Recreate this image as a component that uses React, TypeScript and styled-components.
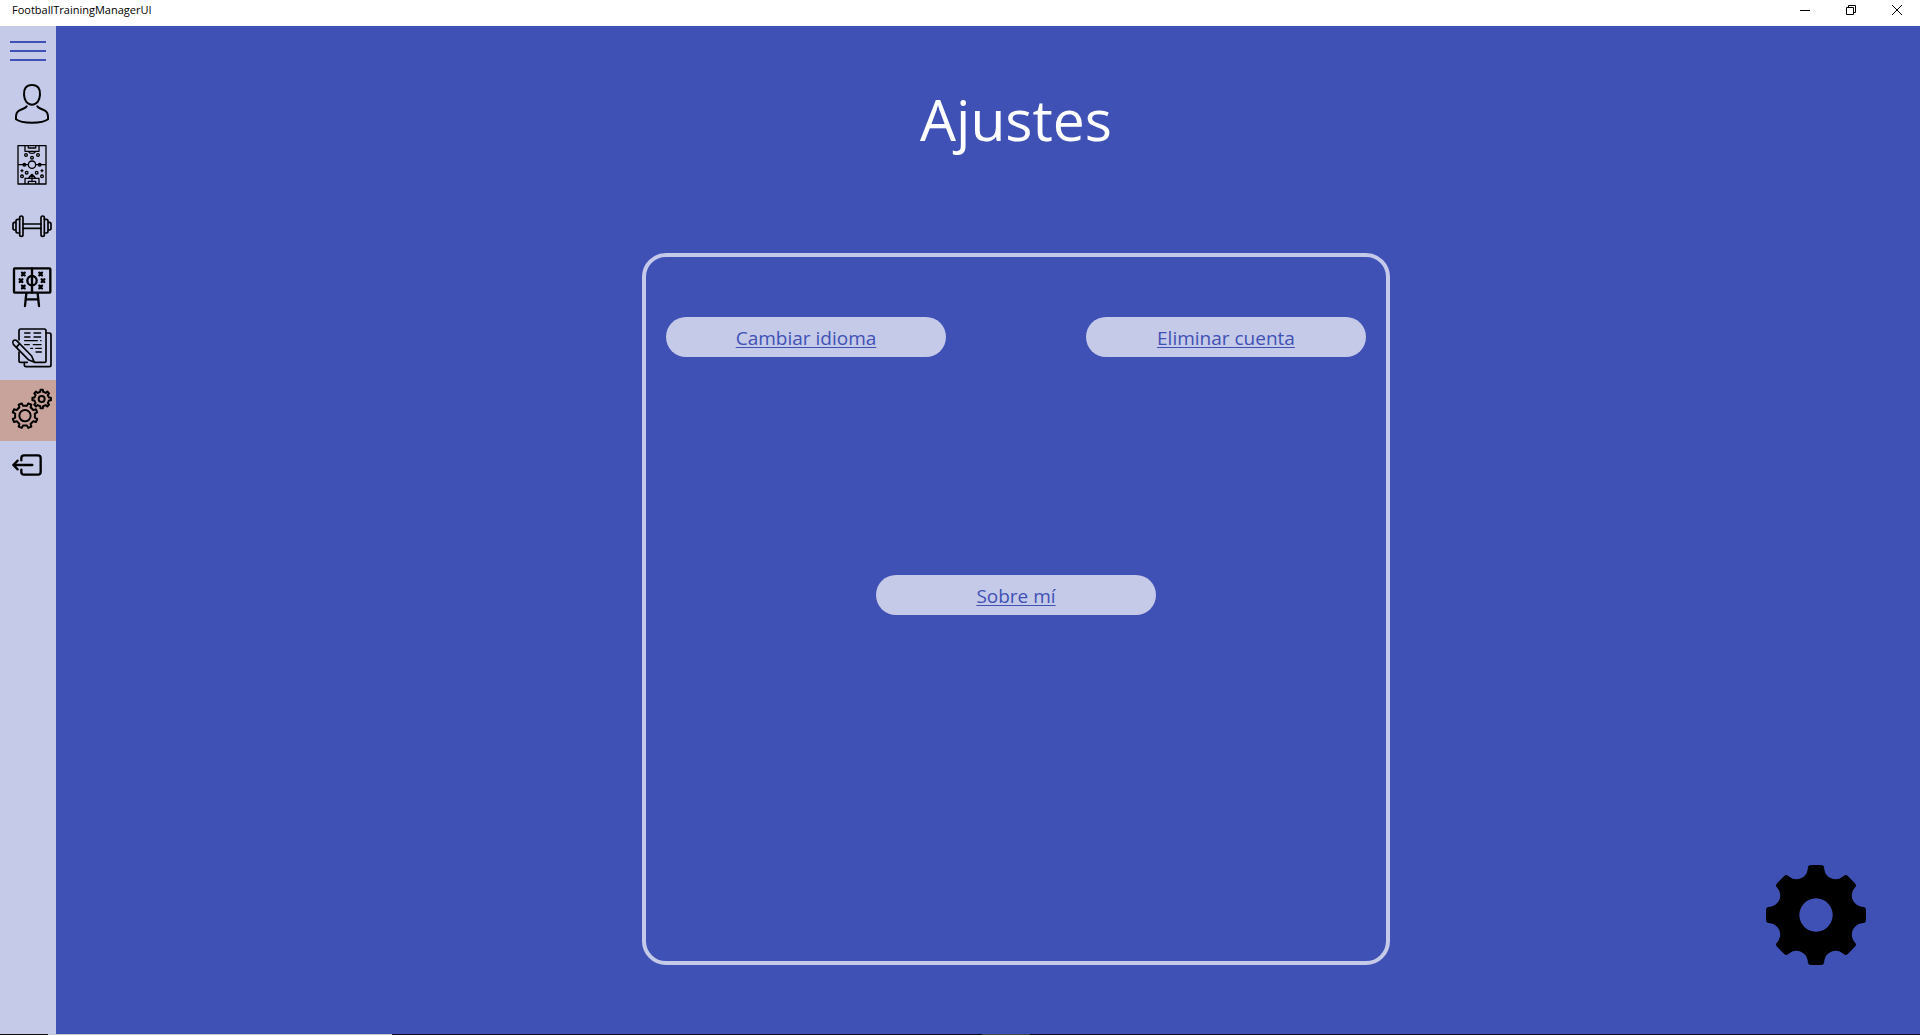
import React from "react";
import styled, { createGlobalStyle } from "styled-components";

const indigo = "#3f51b5";
const lavender = "#c5cae9";

const GlobalStyle = createGlobalStyle`
  *, *::before, *::after { box-sizing: border-box; }
  body {
    margin: 0;
    font-family: "Open Sans", "Noto Sans", sans-serif;
  }
  button { font: inherit; border: 0; padding: 0; cursor: pointer; }
`;

const Window = styled.div`
  display: flex;
  flex-direction: column;
  min-height: 100vh;
  background: ${indigo};
`;

const TitleBar = styled.header`
  display: flex;
  justify-content: space-between;
  height: 26px;
  padding-left: 12px;
  background: #fff;
  color: #000;
  font-size: 11px;
  line-height: 20px;
`;

const WindowControls = styled.div`
  display: flex;
`;

const WindowButton = styled.button`
  display: flex;
  align-items: center;
  justify-content: center;
  width: 46px;
  height: 20px;
  background: transparent;
`;

const Body = styled.div`
  display: flex;
  flex: 1;
`;

const Sidebar = styled.nav`
  display: flex;
  flex-direction: column;
  flex: none;
  width: 56px;
  background: ${lavender};
`;

const MenuToggle = styled.button`
  display: flex;
  align-items: center;
  height: 49px;
  padding-left: 10px;
  background: transparent;
`;

const NavButton = styled.button<{ $active?: boolean; $compact?: boolean }>`
  display: flex;
  align-items: ${(p) => (p.$compact ? "center" : "flex-start")};
  height: ${(p) => (p.$compact ? 48 : 61)}px;
  padding: ${(p) => (p.$compact ? 0 : 9)}px 0 0 12px;
  background: ${(p) => (p.$active ? "#c8a39b" : "transparent")};
`;

const LineIcon = styled.svg<{ $weight: number }>`
  display: block;
  flex: none;
  overflow: visible;
  fill: none;
  stroke: #000;
  stroke-width: ${(p) => p.$weight};
  stroke-linecap: round;
  stroke-linejoin: round;
`;

const Content = styled.main`
  display: grid;
  grid-template-columns: 1fr minmax(auto, 748px) 1fr;
  grid-template-rows: 227px 1fr;
  flex: 1;
  padding: 0 0 69px 56px;
`;

const Title = styled.h1`
  grid-column: 1 / -1;
  margin: 0;
  padding-top: 53px;
  color: #fff;
  font-size: 57px;
  font-weight: 400;
  line-height: 80px;
  text-align: center;
`;

const Card = styled.section`
  grid-column: 2;
  display: flex;
  flex-wrap: wrap;
  justify-content: space-between;
  align-content: flex-start;
  row-gap: 218px;
  padding: 60px 20px;
  border: 4px solid ${lavender};
  border-radius: 24px;
`;

const PillButton = styled.button<{ $centered?: boolean }>`
  width: 280px;
  height: 40px;
  margin: ${(p) => (p.$centered ? "0 auto" : "0")};
  padding-top: 2px;
  border-radius: 20px;
  background: ${lavender};
  color: ${indigo};
  font-size: 19px;
  line-height: 38px;
  text-decoration: underline;
  text-decoration-thickness: 1px;
  text-underline-offset: 2px;
`;

const Corner = styled.div`
  display: flex;
  align-items: flex-end;
  justify-content: flex-end;
  padding-right: 54px;
`;

const TaskbarEdge = styled.footer`
  height: 1px;
  background: linear-gradient(
    to right,
    #120c14 48px,
    #c4c6cf 48px 392px,
    #0c0a1c 392px 982px,
    #45404e 982px 1030px,
    #0c0a1c 1030px
  );
`;

/* Outline of a toothed wheel: flat teeth joined by rounded valleys. */
function cogPath(cx: number, cy: number, outer: number, root: number, teeth: number, turn = 0) {
  const step = (Math.PI * 2) / teeth;
  const at = (r: number, a: number) =>
    `${(cx + r * Math.sin(a)).toFixed(1)} ${(cy - r * Math.cos(a)).toFixed(1)}`;
  let d = "";
  for (let i = 0; i < teeth; i++) {
    const a = i * step + turn;
    d += `${i ? "L" : "M"}${at(root, a - step * 0.25)}L${at(outer, a - step * 0.17)}`;
    d += `L${at(outer, a + step * 0.17)}L${at(root, a + step * 0.25)}`;
    d += `Q${at(root, a + step * 0.5)} ${at(root, a + step * 0.75)}`;
  }
  return d + "Z";
}

/* Solid wheel with eight teeth and deep circular notches. */
function solidCogPath() {
  const pt = (x: number, y: number, k: number) => {
    const a = (k * Math.PI) / 4;
    const px = x * Math.cos(a) - y * Math.sin(a);
    const py = x * Math.sin(a) + y * Math.cos(a);
    return `${(150 + px).toFixed(1)} ${(150 + py).toFixed(1)}`;
  };
  let d = `M${pt(-25, -136, 0)}`;
  for (let k = 0; k < 8; k++) {
    d += `L${pt(-24, -144, k)}Q${pt(-23, -150, k)} ${pt(-15, -150, k)}`;
    d += `L${pt(15, -150, k)}Q${pt(23, -150, k)} ${pt(24, -144, k)}`;
    d += `L${pt(25, -136, k)}A34 34 0 0 0 ${pt(-25, -136, k + 1)}`;
  }
  return d + "ZM150 100a50 50 0 1 0 .1 0Z";
}

const PersonIcon = () => (
  <LineIcon width="40" height="40" viewBox="0 0 120 120" $weight={6}>
    <path d="M60 3C42 3 35 15 36 32C37 50 46 62 60 62C74 62 83 50 84 32C85 15 78 3 60 3Z" />
    <path d="M44 67C36 79 12 74 12 97V106C30 120 90 120 108 106V97C108 74 84 79 76 67" />
  </LineIcon>
);

const PitchIcon = () => (
  <LineIcon width="40" height="40" viewBox="0 0 120 120" $weight={4}>
    <path d="M18 2H102V117H18ZM18 59H49M71 59H102M39 2V19H81V2M49 2V9H71V2M50 20C53 27 67 27 70 20M39 117V100H81V117M49 117V109H71V117M50 99C53 91 67 91 70 99M60 90V110M54 94L60 88L66 94" />
    <circle cx="60" cy="59" r="11" />
    {[[42, 30], [78, 30], [60, 38], [37, 59], [83, 59], [44, 83], [74, 83], [30, 94], [90, 94]].map(([x, y]) => (
      <circle key={`${x}-${y}`} cx={x} cy={y} r="4" />
    ))}
    <path d="M27 77H33M30 74V80M87 77H93M90 74V80" />
  </LineIcon>
);

const DumbbellIcon = () => (
  <LineIcon width="40" height="40" viewBox="0 0 120 120" $weight={5}>
    <rect x="23" y="30" width="10" height="61" rx="5" />
    <rect x="87" y="30" width="10" height="61" rx="5" />
    <path d="M23 40H17Q12 40 12 45V76Q12 81 17 81H23M12 49H8Q3 49 3 54V67Q3 72 8 72H12M97 40H103Q108 40 108 45V76Q108 81 103 81H97M108 49H112Q117 49 117 54V67Q117 72 112 72H108M33 54H87M33 67H87" />
  </LineIcon>
);

const BoardIcon = () => (
  <LineIcon width="40" height="40" viewBox="0 0 120 120" $weight={7}>
    <rect x="6" y="4" width="109" height="73" rx="2" />
    <path d="M60 4V77M43 79L39 117M77 79L81 117M42 97H79" />
    <circle cx="60" cy="41" r="14" />
    <path d={[[34, 21], [27, 41], [34, 60], [86, 21], [93, 41], [86, 60]]
      .map(([x, y]) => `M${x - 4} ${y - 4}l8 8m0 -8l-8 8`).join("")} />
  </LineIcon>
);

const NotesIcon = () => (
  <LineIcon width="40" height="40" viewBox="0 0 120 120" $weight={5}>
    <path d="M21 36V8Q21 3 26 3H97Q102 3 102 8V98Q102 103 97 103H68M46 103H26Q21 103 21 98V72" />
    <path d="M103 15H112Q117 15 117 20V111Q117 116 112 116H42Q37 116 37 111V104" />
    <path d="M38 27H54M66 27H86M38 38H76M86 38H87M38 50H52M64 50H87M56 61H62M71 61H88M72 72H88M38 15H54M66 15H86" strokeWidth="4" />
    <path d="M4 38Q9 34 14 38L59 84L67 103L49 95L4 49Q0 43 4 38ZM13 58L23 47" />
  </LineIcon>
);

const SettingsIcon = () => (
  <LineIcon width="40" height="40" viewBox="0 0 120 120" $weight={6}>
    <path d={cogPath(39, 80, 38, 30, 8, Math.PI / 8)} />
    <circle cx="39" cy="80" r="17" />
    <path d={cogPath(89, 30, 28, 22, 8)} />
    <circle cx="89" cy="30" r="9" />
  </LineIcon>
);

const ExitIcon = () => (
  <LineIcon width="30" height="22" viewBox="0 0 90 66" $weight={7}>
    <path d="M28 19V12Q28 4 36 4H78Q86 4 86 12V54Q86 62 78 62H36Q28 62 28 54V47M61 33H4M17 20L4 33L17 46" />
  </LineIcon>
);

const navItems = [
  { label: "Perfil", icon: <PersonIcon /> },
  { label: "Alineaciones", icon: <PitchIcon /> },
  { label: "Ejercicios", icon: <DumbbellIcon /> },
  { label: "Entrenamientos", icon: <BoardIcon /> },
  { label: "Notas", icon: <NotesIcon /> },
  { label: "Ajustes", icon: <SettingsIcon />, active: true },
  { label: "Salir", icon: <ExitIcon />, compact: true },
];

export default function App() {
  return (
    <Window>
      <GlobalStyle />
      <TitleBar>
        <span>FootballTrainingManagerUI</span>
        <WindowControls>
          <WindowButton aria-label="Minimizar">
            <svg width="10" height="10" stroke="#000" fill="none"><path d="M0 5.5H10" /></svg>
          </WindowButton>
          <WindowButton aria-label="Restaurar">
            <svg width="10" height="10" stroke="#000" fill="none"><path d="M.5 2.5H7.5V9.5H.5ZM2.5 2.5V.5H9.5V7.5H7.5" /></svg>
          </WindowButton>
          <WindowButton aria-label="Cerrar">
            <svg width="10" height="10" stroke="#000" fill="none"><path d="M0 0L10 10M10 0L0 10" /></svg>
          </WindowButton>
        </WindowControls>
      </TitleBar>
      <Body>
        <Sidebar>
          <MenuToggle aria-label="Menú">
            <svg width="36" height="20" fill={indigo}><path d="M0 0H36V2H0ZM0 9H36V11H0ZM0 18H36V20H0Z" /></svg>
          </MenuToggle>
          {navItems.map((item) => (
            <NavButton key={item.label} aria-label={item.label} $active={item.active} $compact={item.compact}>
              {item.icon}
            </NavButton>
          ))}
        </Sidebar>
        <Content>
          <Title>Ajustes</Title>
          <Card>
            <PillButton>Cambiar idioma</PillButton>
            <PillButton>Eliminar cuenta</PillButton>
            <PillButton $centered>Sobre mí</PillButton>
          </Card>
          <Corner>
            <svg width="100" height="100" viewBox="0 0 300 300">
              <path d={solidCogPath()} fillRule="evenodd" />
            </svg>
          </Corner>
        </Content>
      </Body>
      <TaskbarEdge />
    </Window>
  );
}
